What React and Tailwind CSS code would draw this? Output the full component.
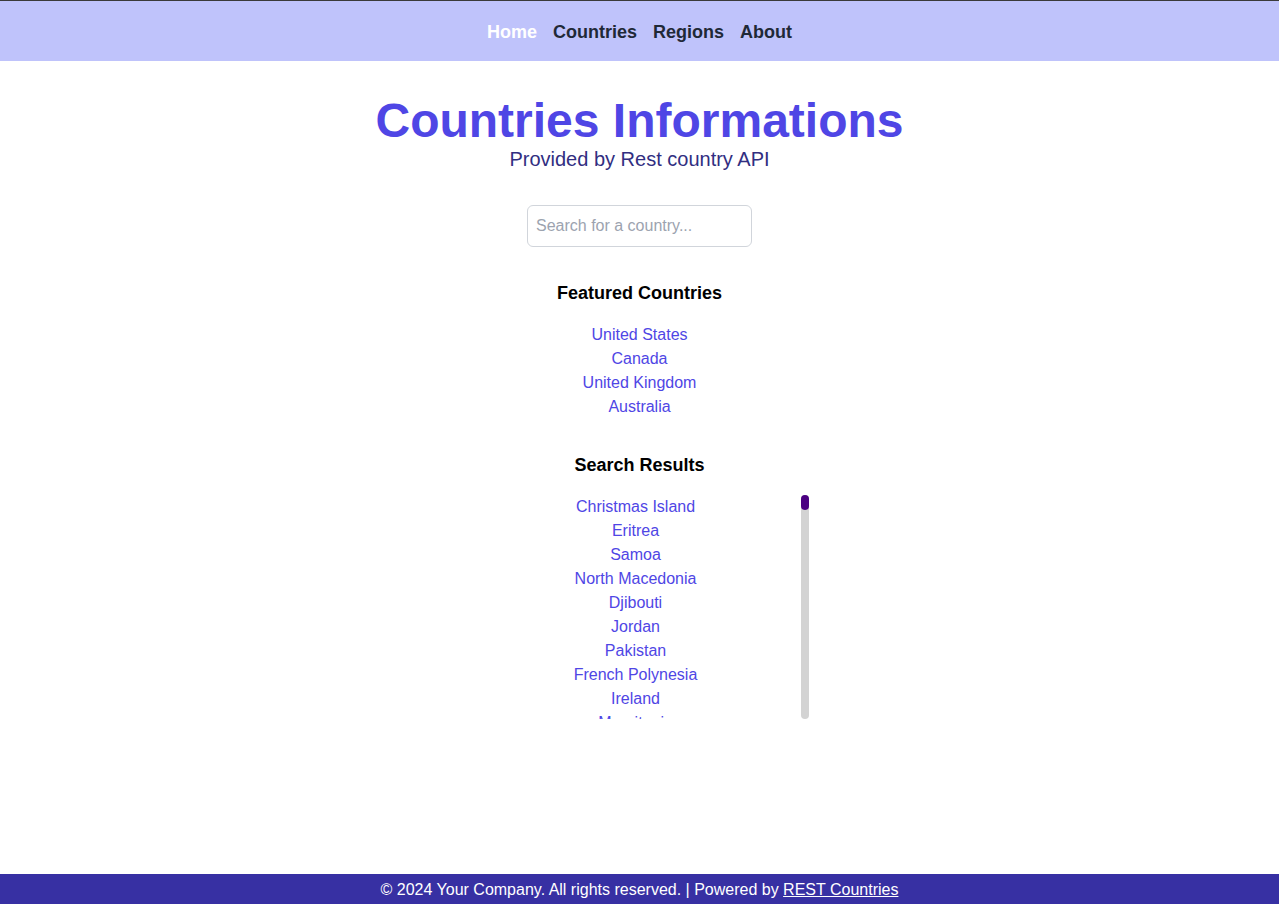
import React from "react";

const featured = ["United States", "Canada", "United Kingdom", "Australia"];

const results = [
  "Christmas Island", "Eritrea", "Samoa", "North Macedonia", "Djibouti", "Jordan",
  "Pakistan", "French Polynesia", "Ireland", "Mauritania", "Iceland", "Bhutan",
  "Peru", "Norway", "Guatemala", "Tunisia", "Belize", "Moldova", "Finland",
  "Argentina", "Brunei", "Chile", "Kenya", "Nepal", "Oman", "Qatar", "Rwanda",
  "Sweden", "Togo", "Uganda", "Vietnam", "Yemen", "Zambia", "Albania", "Bolivia",
  "Cuba", "Denmark", "Ecuador", "Fiji", "Ghana", "Haiti", "India", "Japan",
];

export default function App() {
  return (
    <div
      className="min-h-screen flex flex-col bg-white"
      style={{ fontFamily: '"Liberation Sans", Arial, sans-serif' }}
    >
      <nav className="border-t border-[#3a3a3a] bg-[#bfc3fb] h-[61px] pt-px flex items-center justify-center gap-4 text-lg font-bold">
        <a className="text-white">Home</a>
        <a className="text-[#1f2937]">Countries</a>
        <a className="text-[#1f2937]">Regions</a>
        <a className="text-[#1f2937]">About</a>
      </nav>

      <main className="flex-1 flex flex-col items-center pt-9">
        <h1 className="text-5xl leading-[48px] font-bold text-[#4f46e5]">
          Countries Informations
        </h1>
        <p className="text-xl leading-7 text-[#312e81]">Provided by Rest country API</p>

        <input
          type="text"
          placeholder="Search for a country..."
          className="mt-8 w-[225px] h-[42px] px-2 border border-[#d1d5db] rounded-md text-base placeholder:text-[#9ca3af] outline-none"
        />

        <h2 className="mt-8 text-lg leading-7 font-bold text-black">Featured Countries</h2>
        <ul className="mt-4 flex flex-col items-center">
          {featured.map((c) => (
            <li key={c} className="leading-6 text-[#4f46e5]">{c}</li>
          ))}
        </ul>

        <h2 className="mt-8 text-lg leading-7 font-bold text-black">Search Results</h2>
        <div className="mt-4 flex w-[338px] h-[224px]">
          <ul className="flex-1 overflow-hidden flex flex-col items-center">
            {results.map((c) => (
              <li key={c} className="shrink-0 leading-6 text-[#4f46e5]">{c}</li>
            ))}
          </ul>
          <div className="w-2 h-full bg-[#d3d3d3] rounded">
            <div className="h-[15px] bg-[#4b0082] rounded" />
          </div>
        </div>
      </main>

      <footer className="h-[30px] bg-[#3730a3] text-white flex items-center justify-center text-base pt-px">
        <p>
          © 2024 Your Company. All rights reserved. | Powered by <a className="underline">REST Countries</a>
        </p>
      </footer>
    </div>
  );
}
